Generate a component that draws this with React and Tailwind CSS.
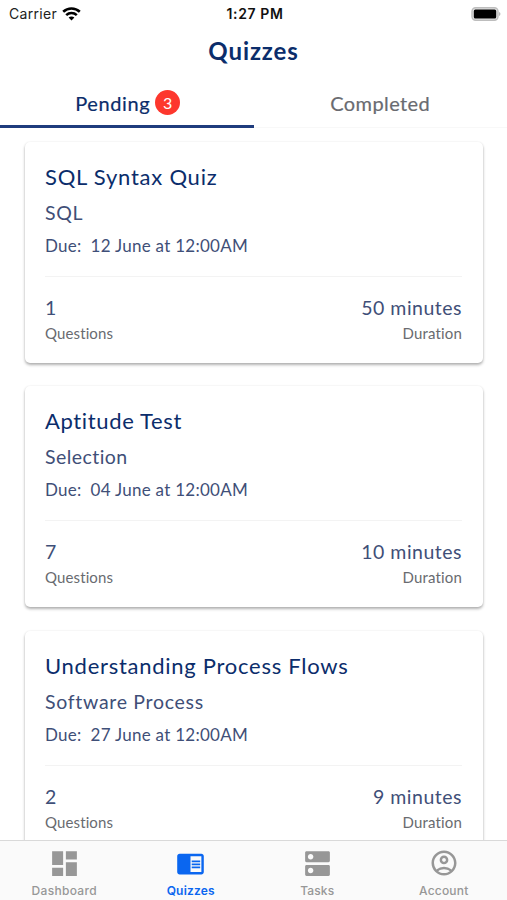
import { MdDashboard, MdChromeReaderMode, MdDns, MdOutlineAccountCircle } from "react-icons/md";

const quizzes = [
  { title: "SQL Syntax Quiz", titleTrack: "tracking-[0.76px]", subject: "SQL", subjectTrack: "tracking-[0.7px]", due: "12 June at 12:00AM", count: "1", duration: "50 minutes" },
  { title: "Aptitude Test", titleTrack: "tracking-[0.65px]", subject: "Selection", subjectTrack: "tracking-[0.45px]", due: "04 June at 12:00AM", count: "7", duration: "10 minutes" },
  { title: "Understanding Process Flows", titleTrack: "tracking-[0.73px]", subject: "Software Process", subjectTrack: "tracking-[0.7px]", due: "27 June at 12:00AM", count: "2", duration: "9 minutes" },
];

function StatusBar() {
  return (
    <div className="grid h-[27px] shrink-0 grid-cols-3 items-center pr-[6px] pl-[9px] font-['Inter',sans-serif] text-[14px] text-[#222]">
      <div className="flex items-center gap-[5px]">
        <span className="tracking-[0.3px]">Carrier</span>
        <svg width="19" height="14" viewBox="0 0 19 14" fill="none" stroke="#000" strokeWidth="2.6">
          <path d="M1.2 4.8C5.9.4 13.1.4 17.8 4.8" />
          <path d="M4.2 8.1c3-2.8 7.6-2.8 10.6 0" />
          <path d="M9.5 13.4 6.6 10.5c1.6-1.5 4.2-1.5 5.8 0z" fill="#000" stroke="none" />
        </svg>
      </div>
      <span className="text-center font-semibold tracking-[0.6px] text-[#111]">1:27 PM</span>
      <svg className="justify-self-end" width="30" height="14" viewBox="0 0 30 14">
        <rect x="1" y=".8" width="26" height="12.4" rx="3.6" fill="#e4e4e4" stroke="#bdbdbd" strokeWidth="1.4" />
        <rect x="2.8" y="2.5" width="22.4" height="9" rx="1.6" fill="#000" />
        <path d="M28.2 5v4c1.6-.6 1.6-3.4 0-4z" fill="#aaa" />
      </svg>
    </div>
  );
}

function QuizCard({ quiz }) {
  return (
    <article className="h-[221px] shrink-0 rounded-[5px] bg-white pt-5 pr-[21px] pl-5 text-[#3f4f78] shadow-[0_2px_3px_rgba(0,0,0,0.3),0_0_2px_rgba(0,0,0,0.08)]">
      <h2 className={"text-[22px] leading-[29px] text-[#0b2d6b] " + quiz.titleTrack}>{quiz.title}</h2>
      <p className={"mt-[7px] text-[19.5px] leading-[30px] " + quiz.subjectTrack}>{quiz.subject}</p>
      <p className="mt-1.5 flex gap-[9px] text-[17px] leading-6 tracking-[0.27px]">
        <span>Due:</span>
        <span>{quiz.due}</span>
      </p>
      <div className="mt-[18px] flex justify-between border-t border-[#f3f3f3] pt-[18px]">
        <div>
          <p className="text-[19.5px] leading-[26px]">{quiz.count}</p>
          <p className="mt-[2px] text-[15px] leading-5 tracking-[0.12px] text-[#696b70]">Questions</p>
        </div>
        <div className="text-right">
          <p className="text-[19.5px] leading-[26px] tracking-[0.5px]">{quiz.duration}</p>
          <p className="mt-[2px] text-[15px] leading-5 tracking-[0.15px] text-[#696b70]">Duration</p>
        </div>
      </div>
    </article>
  );
}

function NavItem({ icon, label, className }) {
  return (
    <div className={"flex flex-col items-center pt-[5px] text-[12px] leading-4 " + className}>
      <div className="flex h-[34px] items-center">{icon}</div>
      <span className="mt-[3px]">{label}</span>
    </div>
  );
}

export default function App() {
  return (
    <div className="flex h-[900px] w-[507px] flex-col overflow-hidden bg-white font-['Lato',sans-serif]">
      <StatusBar />
      <h1 className="h-[53px] shrink-0 pt-px text-center text-[24px] leading-[46px] font-bold tracking-[0.9px] text-[#0b2d6b]">Quizzes</h1>
      <div className="grid h-12 shrink-0 grid-cols-2 text-[20px] leading-none">
        <div className="flex items-center justify-center gap-[5px] border-b-[3px] border-[#1f3c7d] pl-[2px] text-[#0b2d6b]">
          <span className="tracking-[0.6px] [-webkit-text-stroke:0.2px_#0b2d6b]">Pending</span>
          <span className="flex size-[25px] items-center justify-center rounded-full bg-[#fd372d] text-[16px] text-white">3</span>
        </div>
        <div className="flex items-center justify-center border-b border-[#f8f8f8] pb-[2px] tracking-[0.4px] text-[#696b70] [-webkit-text-stroke:0.2px_#696b70]">Completed</div>
      </div>
      <main className="flex min-h-0 flex-1 flex-col gap-[23.3px] overflow-hidden px-[25px] pt-3.5 pr-6">
        {quizzes.map((quiz) => <QuizCard key={quiz.title} quiz={quiz} />)}
      </main>
      <nav className="grid h-[60px] shrink-0 grid-cols-4 border-t border-[#d9d9d9] bg-[#fafafa] pl-px font-['Inter',sans-serif]">
        <NavItem label="Dashboard" icon={<MdDashboard size={33} />} className="font-medium tracking-[0.3px] text-[#979797]" />
        <NavItem label="Quizzes" icon={<MdChromeReaderMode size={29} />} className="font-semibold tracking-[0.2px] text-[#0a66f0]" />
        <NavItem label="Tasks" icon={<MdDns size={33} />} className="font-medium tracking-[0.1px] text-[#979797]" />
        <NavItem label="Account" icon={<MdOutlineAccountCircle size={30} />} className="font-medium tracking-[0.2px] text-[#979797]" />
      </nav>
    </div>
  );
}
